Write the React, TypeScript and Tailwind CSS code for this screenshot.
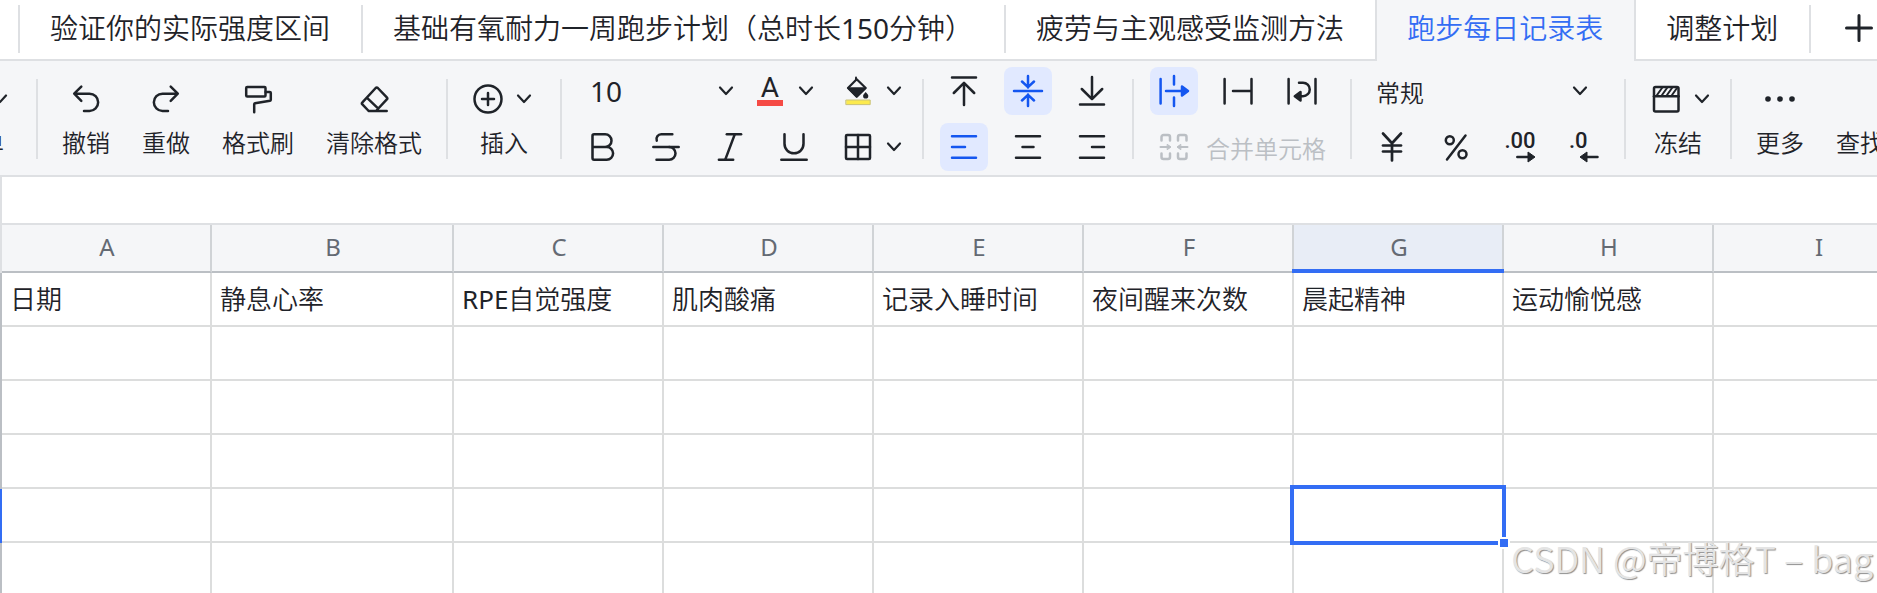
import type { ReactNode } from "react";
import { clsx } from "clsx";
import { Bold, Strikethrough, Italic, Underline, JapaneseYen } from "lucide-react";

const TABS_BEFORE = ["验证你的实际强度区间", "基础有氧耐力一周跑步计划（总时长150分钟）", "疲劳与主观感受监测方法"];
const ACTIVE_TAB = "跑步每日记录表";
const COLUMNS = ["A", "B", "C", "D", "E", "F", "G", "H", "I"];
const HEADINGS = ["日期", "静息心率", "RPE自觉强度", "肌肉酸痛", "记录入睡时间", "夜间醒来次数", "晨起精神", "运动愉悦感", ""];
const ROWS = [1, 2, 3, 4, 5, 6];
const SELECTED = { col: "G", row: 5 };

function Icon({ children }: { children: ReactNode }) {
    return (
        <svg viewBox="0 0 32 32" className="size-8 shrink-0 overflow-visible" fill="none" stroke="currentColor"
            strokeWidth="2.5" strokeLinecap="round" strokeLinejoin="round" aria-hidden="true">
            {children}
        </svg>
    );
}

function Chevron() {
    return (
        <svg viewBox="0 0 24 24" className="size-6 shrink-0" fill="none" stroke="currentColor"
            strokeWidth="2.2" strokeLinecap="round" strokeLinejoin="round" aria-hidden="true">
            <path d="M6 8.5l6 6.5 6-6.5" />
        </svg>
    );
}

// Latin letters and digits look too thin next to the Chinese demi-light, so they get the regular weight
function MixedText({ text }: { text: string }) {
    return text.split(/([A-Za-z0-9]+)/).map((part, i) =>
        i % 2 ? <span key={i} className="font-normal">{part}</span> : part
    );
}

function TabDivider() {
    return <span className="mt-[5px] h-12 w-0.5 shrink-0 bg-[#dee0e3]" />;
}

function Tab({ label }: { label: string }) {
    return (
        <button className="shrink-0 pr-[31px] pb-1 pl-[30px] font-[350] whitespace-nowrap"><MixedText text={label} /></button>
    );
}

function Divider() {
    return <span className="mt-[18px] h-20 w-0.5 shrink-0 bg-[#dee0e3]" />;
}

// Tall button: icon on top, caption below
function LabelButton({ label, children }: { label: string; children: ReactNode }) {
    return (
        <button className="flex shrink-0 flex-col items-center gap-3 pt-[22px] text-2xl leading-8 font-[350] whitespace-nowrap">
            <span className="flex h-8 items-center">{children}</span>
            {label}
        </button>
    );
}

// Square button used in the two-row groups
function ToolButton({ title, active, children }: { title: string; active?: boolean; children: ReactNode }) {
    return (
        <button
            title={title}
            className={clsx("flex size-12 shrink-0 items-center justify-center rounded-lg", active && "bg-[#e1e9ff] text-[#1456f0]")}
        >
            {children}
        </button>
    );
}

function SplitButton({ title, children }: { title: string; children: ReactNode }) {
    return (
        <button title={title} className="flex h-12 shrink-0 items-center">
            <span className="flex w-12 justify-center">{children}</span>
            <Chevron />
        </button>
    );
}

function TwoRows({ children }: { children: ReactNode }) {
    return <div className="flex shrink-0 flex-col gap-2 px-4 pt-1.5">{children}</div>;
}

function TabBar() {
    return (
        <nav className="flex h-[61px] overflow-hidden text-[28px] leading-8">
            <div className="flex shrink-0 border-b-2 border-[#dee0e3] bg-white pl-[18px]">
                {TABS_BEFORE.map((label) => (
                    <div key={label} className="flex">
                        <TabDivider />
                        <Tab label={label} />
                    </div>
                ))}
            </div>
            <button className="shrink-0 border-x-2 border-[#dee0e3] pr-[31px] pb-1.5 pl-[30px] font-[350] whitespace-nowrap text-[#336df4]">
                {ACTIVE_TAB}
            </button>
            <div className="flex grow border-b-2 border-[#dee0e3] bg-white">
                <Tab label="调整计划" />
                <TabDivider />
                <button title="新建工作表" className="flex w-24 shrink-0 items-center justify-center pb-1">
                    <Icon><path d="M16 3.5v25M3.5 16h25" strokeWidth="3" /></Icon>
                </button>
            </div>
        </nav>
    );
}

function Toolbar() {
    return (
        <div className="flex h-[116px] overflow-hidden border-b-2 border-[#dee0e3]">
            {/* Menu entry is scrolled half out of view */}
            <div className="flex w-9 shrink-0 justify-end overflow-hidden pr-6">
                <LabelButton label="菜单">
                    <span className="flex items-center gap-2">
                        <Icon><path d="M4 8h24M4 16h24M4 24h24" /></Icon>
                        <Chevron />
                    </span>
                </LabelButton>
            </div>
            <Divider />

            <div className="flex shrink-0 gap-8 px-6">
                <LabelButton label="撤销">
                    <Icon><path d="M11.3 3.7L4.2 10.7l7.1 7.1M4.5 10.7h15a8.6 8.6 0 0 1 0 17.3h-5.5" /></Icon>
                </LabelButton>
                <LabelButton label="重做">
                    <Icon><path d="M20.7 3.7l7.1 7-7.1 7.1M27.5 10.7h-15a8.6 8.6 0 0 0 0 17.3h5.5" /></Icon>
                </LabelButton>
                <LabelButton label="格式刷">
                    <Icon>
                        <rect x="4.2" y="4" width="19.3" height="9.6" rx="1" />
                        <path d="M23.7 9h4.1a1 1 0 0 1 1 1v6.8a1 1 0 0 1-.8 1L13 20.2a1 1 0 0 0-.8 1v8" />
                    </Icon>
                </LabelButton>
                <LabelButton label="清除格式">
                    <Icon>
                        <path d="M10.7 28l-6.3-6.6a1.5 1.5 0 0 1 0-2.1L17.7 5a1.5 1.5 0 0 1 2.1 0l9 9.3a1.5 1.5 0 0 1 0 2.1L18 28M10.7 28h18M8.8 14.6l11.5 11" />
                    </Icon>
                </LabelButton>
            </div>
            <Divider />

            <div className="flex shrink-0 px-6">
                <LabelButton label="插入">
                    <span className="flex items-center gap-2">
                        <Icon><circle cx="16" cy="16" r="13.5" /><path d="M16 10v12M10 16h12" /></Icon>
                        <Chevron />
                    </span>
                </LabelButton>
            </div>
            <Divider />

            <TwoRows>
                <div className="flex items-center">
                    <label className="mr-2 grid w-40 items-center">
                        <select aria-label="字号" className="col-start-1 row-start-1 h-12 appearance-none bg-transparent pl-3 text-[28px] leading-8">
                            <option>10</option>
                        </select>
                        <span className="pointer-events-none col-start-1 row-start-1 justify-self-end"><Chevron /></span>
                    </label>
                    <SplitButton title="字体颜色">
                        <span className="flex w-[26px] flex-col items-center">
                            <span className="font-[Roboto] text-[28px] leading-6">A</span>
                            <span className="h-1.5 w-full bg-[#f54a45]" />
                        </span>
                    </SplitButton>
                    <span className="w-4" />
                    <SplitButton title="填充颜色">
                        <Icon>
                            <path d="M14.7 4.2l9 8.8-9 8.6L6 13z" strokeWidth="2.2" />
                            <path d="M6 13h17.5l-8.8 8.6z" fill="currentColor" strokeWidth="1.5" />
                            <path d="M14 2.5v2" strokeWidth="2" />
                            <path d="M23.7 17c1.6 1.8 2.6 2.8 2.6 4a2.6 2.6 0 0 1-5.2 0c0-1.2 1-2.2 2.6-4z" fill="currentColor" stroke="none" />
                            <rect x="4.2" y="25" width="24" height="4.6" fill="#fcea4e" stroke="#c9c27a" strokeWidth="1" />
                        </Icon>
                    </SplitButton>
                </div>
                <div className="flex gap-4">
                    <ToolButton title="加粗"><Bold size={38} strokeWidth={1.6} /></ToolButton>
                    <ToolButton title="删除线"><Strikethrough size={38} strokeWidth={1.6} /></ToolButton>
                    <ToolButton title="斜体"><Italic size={38} strokeWidth={1.6} /></ToolButton>
                    <ToolButton title="下划线"><Underline size={38} strokeWidth={1.6} /></ToolButton>
                    <SplitButton title="边框">
                        <Icon><rect x="4" y="4" width="24" height="24" rx="1" /><path d="M16 4v24M4 16h24" /></Icon>
                    </SplitButton>
                </div>
            </TwoRows>
            <Divider />

            <TwoRows>
                <div className="flex gap-4">
                    <ToolButton title="顶端对齐">
                        <Icon><path d="M4 2.6h24M16 8v22M5.8 18L16 7.8 26.2 18" /></Icon>
                    </ToolButton>
                    <ToolButton title="垂直居中" active>
                        <Icon><path d="M2 16h28M16 1v11.5M10 6.5l6 5.7 6-5.7M16 31V19.5M10 25.5l6-5.7 6 5.7" /></Icon>
                    </ToolButton>
                    <ToolButton title="底端对齐">
                        <Icon><path d="M4 29.4h24M16 2v22M5.8 14L16 24.2 26.2 14" /></Icon>
                    </ToolButton>
                </div>
                <div className="flex gap-4">
                    <ToolButton title="左对齐" active><Icon><path d="M4 5.3h24M4 16h13M4 26.7h24" /></Icon></ToolButton>
                    <ToolButton title="居中对齐"><Icon><path d="M4 5.3h24M10.5 16h11M4 26.7h24" /></Icon></ToolButton>
                    <ToolButton title="右对齐"><Icon><path d="M4 5.3h24M16 16h12M4 26.7h24" /></Icon></ToolButton>
                </div>
            </TwoRows>
            <Divider />

            <TwoRows>
                <div className="flex gap-4 pr-2">
                    <ToolButton title="溢出" active>
                        <Icon>
                            <path d="M2.6 4v24.5M16 1v8.5M16 22.5V31M8 16h16" />
                            <path d="M24 11.5l6 4.5-6 4.5z" fill="currentColor" />
                        </Icon>
                    </ToolButton>
                    <ToolButton title="截断"><Icon><path d="M2.6 4v24.5M29.5 4v24.5M11 16h18" /></Icon></ToolButton>
                    <ToolButton title="自动换行">
                        <Icon>
                            <path d="M2.6 4v24.5M29.5 4v24.5M13 7.7h4a6.7 6.7 0 0 1 0 13.5h-2" />
                            <path d="M14.5 17v8.5L8.8 21.3z" fill="currentColor" />
                        </Icon>
                    </ToolButton>
                </div>
                <button disabled className="flex h-12 items-center gap-4 pl-2 text-2xl leading-8 font-[350] whitespace-nowrap text-[#bbbfc4]">
                    <Icon>
                        <path d="M3.5 9.5V6a2 2 0 0 1 2-2H10a2 2 0 0 1 2 2v3.5M3.5 22.5V26a2 2 0 0 0 2 2H10a2 2 0 0 0 2-2v-3.5" />
                        <path d="M20 9.5V6a2 2 0 0 1 2-2h4.5a2 2 0 0 1 2 2v3.5M20 22.5V26a2 2 0 0 0 2 2h4.5a2 2 0 0 0 2-2v-3.5" />
                        <path d="M2.5 16H10M29.5 16H22" strokeWidth="2" />
                        <path d="M9.5 13.5L13 16l-3.5 2.5zM22.5 13.5L19 16l3.5 2.5z" fill="currentColor" strokeWidth="1" />
                    </Icon>
                    <span className="pt-1">合并单元格</span>
                </button>
            </TwoRows>
            <Divider />

            <TwoRows>
                <label className="grid items-center pr-4">
                    <select aria-label="数字格式" className="col-start-1 row-start-1 h-12 appearance-none bg-transparent pt-1 pl-2 text-2xl leading-8 font-[350]">
                        <option>常规</option>
                    </select>
                    <span className="pointer-events-none col-start-1 row-start-1 justify-self-end"><Chevron /></span>
                </label>
                <div className="flex gap-4">
                    <ToolButton title="货币"><JapaneseYen size={36} strokeWidth={1.8} /></ToolButton>
                    <ToolButton title="百分比">
                        <Icon>
                            <path d="M25.5 4.5L7 28.5" />
                            <circle cx="9.8" cy="9.3" r="4" /><circle cx="22.5" cy="23.3" r="4" />
                        </Icon>
                    </ToolButton>
                    <ToolButton title="增加小数位">
                        <span className="flex flex-col items-end font-[Roboto] text-[22px] leading-5 font-medium">
                            .00
                            <svg viewBox="0 0 20 12" className="h-3 w-5" aria-hidden="true">
                                <path d="M1.3 6H12" stroke="currentColor" strokeWidth="2.5" strokeLinecap="round" />
                                <path d="M12 1l7 5-7 5z" fill="currentColor" stroke="currentColor" strokeLinejoin="round" />
                            </svg>
                        </span>
                    </ToolButton>
                    <ToolButton title="减少小数位">
                        <span className="flex flex-col items-start font-[Roboto] text-[22px] leading-5 font-medium">
                            .0
                            <svg viewBox="0 0 30 12" className="h-3 w-[30px]" aria-hidden="true">
                                <path d="M28.5 6H17" stroke="currentColor" strokeWidth="2.5" strokeLinecap="round" />
                                <path d="M18 1l-7 5 7 5z" fill="currentColor" stroke="currentColor" strokeLinejoin="round" />
                            </svg>
                        </span>
                    </ToolButton>
                </div>
            </TwoRows>
            <Divider />

            <div className="flex shrink-0 px-4">
                <LabelButton label="冻结">
                    <span className="flex items-center gap-2 pl-2">
                        <Icon>
                            <rect x="4" y="4" width="24.5" height="24.5" rx="1.5" />
                            <path d="M4 13.3h24.5" />
                            <path d="M7 12l5-7M12 12l5-7M17 12l5-7M22 12l5-7" strokeWidth="2" />
                        </Icon>
                        <Chevron />
                    </span>
                </LabelButton>
            </div>
            <Divider />

            <div className="flex shrink-0 gap-8 px-6">
                <LabelButton label="更多">
                    <Icon>
                        <g fill="currentColor" stroke="none">
                            <circle cx="4" cy="16" r="2.8" /><circle cx="16" cy="16" r="2.8" /><circle cx="28" cy="16" r="2.8" />
                        </g>
                    </Icon>
                </LabelButton>
                <LabelButton label="查找和替换">
                    <Icon><circle cx="14" cy="14" r="10" /><path d="M21 21l7 7" /></Icon>
                </LabelButton>
            </div>
        </div>
    );
}

function Sheet() {
    return (
        <table className="w-[2134px] table-fixed border-separate border-spacing-0">
            <colgroup>
                <col className="w-0.5" />
                {COLUMNS.map((c) => (
                    <col key={c} className={c === "B" ? "w-[242px]" : "w-[210px]"} />
                ))}
                <col />
            </colgroup>
            <thead>
                <tr className="h-12 text-2xl leading-8 text-[#646a73]">
                    <td className="bg-[#dee0e3] p-0" />
                    {COLUMNS.map((c) => (
                        <th
                            key={c}
                            scope="col"
                            className={clsx(
                                "relative border-r-2 border-b-2 border-r-[#d0d3d6] border-b-[#bbbfc4] p-0 pb-0.5 pl-0.5 font-normal",
                                c === SELECTED.col ? "bg-[#e8edf6]" : "bg-[#f5f6f8]"
                            )}
                        >
                            {c}
                            {c === SELECTED.col && <span className="absolute -right-0.5 -bottom-0.5 -left-0.5 h-1 bg-[#336df4]" />}
                        </th>
                    ))}
                    <td className="border-b-2 border-[#bbbfc4] bg-[#f5f6f8]" />
                </tr>
            </thead>
            <tbody>
                {ROWS.map((row) => (
                    <tr key={row} className="h-[54px] text-[26px] leading-8 font-[350]">
                        <td className={clsx("p-0", row === SELECTED.row ? "bg-[#336df4]" : "bg-[#bbbfc4]")} />
                        {COLUMNS.map((c, i) => (
                            <td key={c} className="relative border-r-2 border-b-2 border-[#dcdddd] py-0 pr-0 pl-2 whitespace-nowrap">
                                {row === 1 && <MixedText text={HEADINGS[i]} />}
                                {c === SELECTED.col && row === SELECTED.row && (
                                    <span className="absolute -top-1 -right-1 -bottom-1 -left-1 z-10 border-4 border-[#336df4]">
                                        <span className="absolute -right-2 -bottom-2 size-3 border-2 border-white bg-[#336df4]" />
                                    </span>
                                )}
                            </td>
                        ))}
                        <td className="border-b-2 border-[#dcdddd]" />
                    </tr>
                ))}
            </tbody>
        </table>
    );
}

export default function App() {
    return (
        <div className="relative h-screen overflow-hidden bg-white font-['Noto_Sans','Noto_Sans_CJK_SC',sans-serif] text-[#1f2329]">
            <div className="bg-[#f5f6f8]">
                <TabBar />
                <Toolbar />
            </div>
            <div className="h-12 border-b-2 border-l-2 border-[#dee0e3]" />
            <Sheet />
            <p className="absolute right-1 bottom-4 font-['Noto_Sans_CJK_SC',sans-serif] text-[36px] leading-10 font-[350] whitespace-nowrap text-[#e4e4e4] [text-shadow:1px_1px_1px_#8f8f8f]">
                CSDN @帝博格T – bag
            </p>
        </div>
    );
}
